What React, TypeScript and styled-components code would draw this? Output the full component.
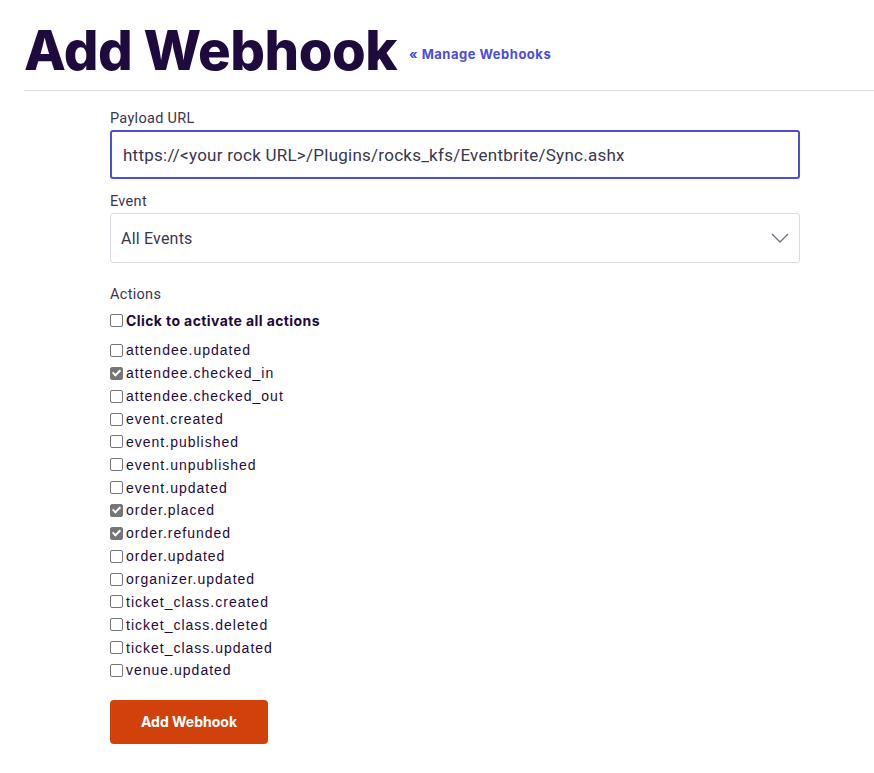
import React, { useState } from 'react';
import styled, { createGlobalStyle } from 'styled-components';

const GlobalStyle = createGlobalStyle`
  body {
    margin: 0;
    background: #ffffff;
    font-family: 'Liberation Sans', Arial, sans-serif;
    color: #1e0a3c;
  }
`;

const actions = [
  { name: 'attendee.updated', checked: false },
  { name: 'attendee.checked_in', checked: true },
  { name: 'attendee.checked_out', checked: false },
  { name: 'event.created', checked: false },
  { name: 'event.published', checked: false },
  { name: 'event.unpublished', checked: false },
  { name: 'event.updated', checked: false },
  { name: 'order.placed', checked: true },
  { name: 'order.refunded', checked: true },
  { name: 'order.updated', checked: false },
  { name: 'organizer.updated', checked: false },
  { name: 'ticket_class.created', checked: false },
  { name: 'ticket_class.deleted', checked: false },
  { name: 'ticket_class.updated', checked: false },
  { name: 'venue.updated', checked: false },
];

const Page = styled.div`
  padding: 18px 0 0 24px;
`;

const Header = styled.header`
  display: flex;
  align-items: center;
  gap: 12px;
  padding-bottom: 8px;
  border-bottom: 1px solid #dbdae3;
`;

const Title = styled.h1`
  margin: 0;
  font-family: Inter, sans-serif;
  font-weight: 800;
  font-size: 54.5px;
  line-height: 64px;
  letter-spacing: -0.5px;
  color: #1e0a3c;
`;

const BackLink = styled.a`
  margin-top: 8px;
  font-family: Inter, sans-serif;
  font-weight: 700;
  font-size: 13px;
  color: #4b4ddb;
  text-decoration: none;
  letter-spacing: 0.5px;
`;

const Form = styled.form`
  width: 690px;
  margin: 18px 0 0 86px;
  display: flex;
  flex-direction: column;
`;

const Label = styled.label`
  display: block;
  font-family: Roboto, sans-serif;
  font-size: 14.5px;
  line-height: 19px;
  letter-spacing: 0.3px;
  color: #39364f;
  margin-bottom: 2px;
`;

const Field = styled.div`
  margin-bottom: 13px;
`;

const TextInput = styled.input`
  box-sizing: border-box;
  width: 100%;
  height: 49px;
  padding: 0 11px;
  border: 2px solid #4b4ddb;
  border-radius: 3px;
  font-family: Roboto, sans-serif;
  font-size: 17px;
  letter-spacing: 0.25px;
  color: #39364f;
  outline: none;
`;

const SelectBox = styled.div`
  box-sizing: border-box;
  height: 50px;
  padding: 0 10px;
  border: 1px solid #dbdae3;
  border-radius: 3px;
  display: flex;
  align-items: center;
  justify-content: space-between;
  font-family: Roboto, sans-serif;
  font-size: 16px;
  letter-spacing: 0.2px;
  color: #39364f;
`;

const ActionsBlock = styled.div`
  margin-top: 9px;
`;

const CheckRow = styled.label<{ $bold?: boolean }>`
  display: flex;
  align-items: center;
  height: ${(p) => (p.$bold ? '28px' : '22.86px')};
  margin-bottom: ${(p) => (p.$bold ? '5px' : '0')};
  font-family: ${(p) => (p.$bold ? 'Inter, sans-serif' : "'Liberation Sans', Arial, sans-serif")};
  font-weight: ${(p) => (p.$bold ? 700 : 400)};
  font-size: 14px;
  letter-spacing: ${(p) => (p.$bold ? '0.4px' : '1px')};
  color: #1e0a3c;
`;

const Box = styled.input`
  appearance: none;
  box-sizing: border-box;
  width: 13px;
  height: 13px;
  margin: 0 3px 0 0;
  border: 1px solid #767676;
  border-radius: 2px;
  background: #fff;
  display: grid;
  place-items: center;
  &:checked {
    background: #767676;
    border-color: #767676;
  }
  &:checked::after {
    content: '';
    width: 3px;
    height: 6px;
    border: solid #fff;
    border-width: 0 2px 2px 0;
    transform: translateY(-1px) rotate(45deg);
  }
`;

const SubmitButton = styled.button`
  margin-top: 18px;
  width: 158px;
  height: 44px;
  border: none;
  border-radius: 4px;
  background: #d1410c;
  color: #fff;
  font-family: Inter, sans-serif;
  font-weight: 700;
  font-size: 14px;
  cursor: pointer;
`;

export default function App() {
  const [checks, setChecks] = useState(actions.map((a) => a.checked));

  return (
    <Page>
      <GlobalStyle />
      <Header>
        <Title>Add Webhook</Title>
        <BackLink href="#">« Manage Webhooks</BackLink>
      </Header>
      <Form onSubmit={(e) => e.preventDefault()}>
        <Field>
          <Label>Payload URL</Label>
          <TextInput
            readOnly
            value="https://<your rock URL>/Plugins/rocks_kfs/Eventbrite/Sync.ashx"
          />
        </Field>
        <Field>
          <Label>Event</Label>
          <SelectBox>
            All Events
            <svg width="18" height="10" viewBox="0 0 18 10">
              <path d="M1 1l8 8 8-8" fill="none" stroke="#6f7287" strokeWidth="1.3" />
            </svg>
          </SelectBox>
        </Field>
        <ActionsBlock>
          <Label>Actions</Label>
          <CheckRow $bold>
            <Box type="checkbox" />
            Click to activate all actions
          </CheckRow>
          {actions.map((a, i) => (
            <CheckRow key={a.name}>
              <Box
                type="checkbox"
                checked={checks[i]}
                onChange={() =>
                  setChecks((prev) => prev.map((c, j) => (j === i ? !c : c)))
                }
              />
              {a.name}
            </CheckRow>
          ))}
        </ActionsBlock>
        <div>
          <SubmitButton type="submit">Add Webhook</SubmitButton>
        </div>
      </Form>
    </Page>
  );
}
